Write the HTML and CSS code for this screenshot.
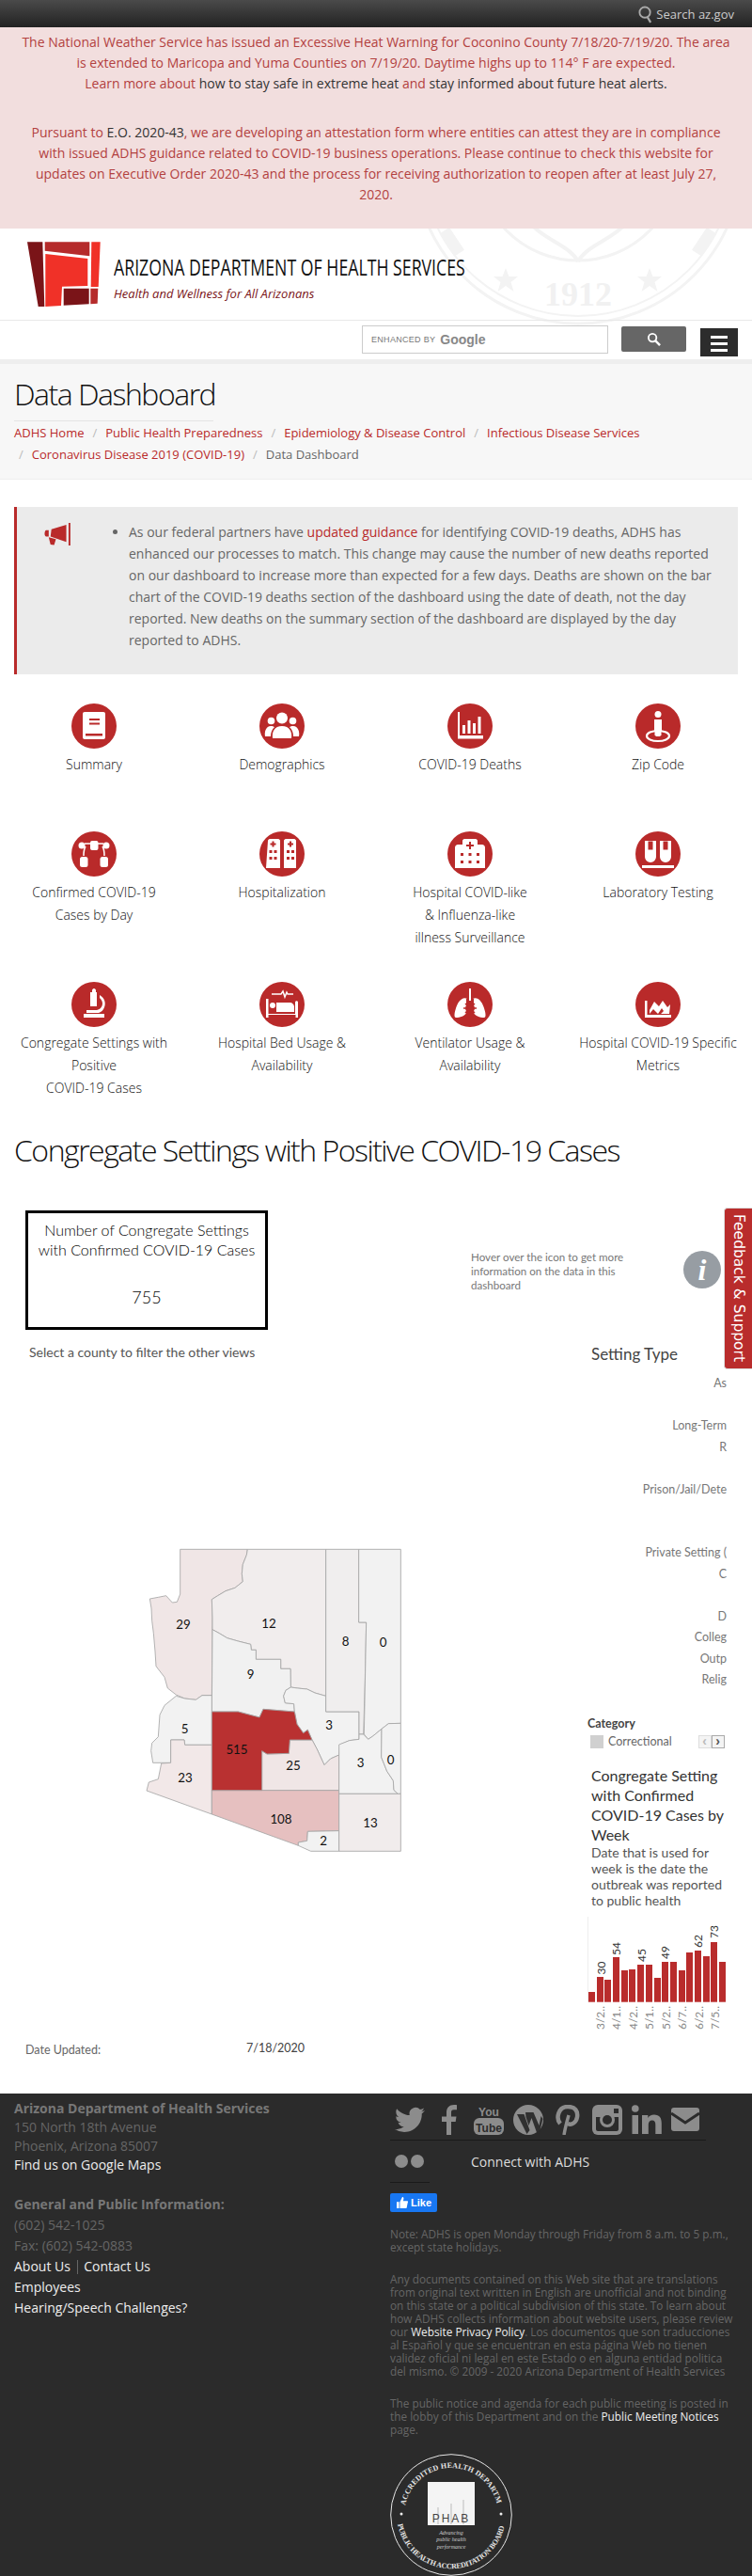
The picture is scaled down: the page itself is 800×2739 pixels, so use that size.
FILE: index.html
```html
<!DOCTYPE html>
<html lang="en">
<head>
<meta charset="utf-8">
<title>Data Dashboard</title>
<link rel="stylesheet" href="styles.css">
</head>
<body>
<div class="topbar">
  <svg class="top-search" viewBox="0 0 16 22" width="15" height="22"><circle cx="7.5" cy="9" r="6" fill="none" stroke="#aaa" stroke-width="2"/><path d="M10.5 14.5l3.5 6" stroke="#aaa" stroke-width="2.4"/></svg>
  <span>Search az.gov</span>
</div>
<section class="alert">
  <p>The National Weather Service has issued an Excessive Heat Warning for Coconino County 7/18/20-7/19/20. The area is extended to Maricopa and Yuma Counties on 7/19/20. Daytime highs up to 114° F are expected.<br>Learn more about <a class="dk">how to stay safe in extreme heat</a> and <a class="dk">stay informed about future heat alerts.</a></p>
  <p>Pursuant to <a class="dk">E.O. 2020-43</a>, we are developing an attestation form where entities can attest they are in compliance with issued ADHS guidance related to COVID-19 business operations. Please continue to check this website for updates on Executive Order 2020-43 and the process for receiving authorization to reopen after at least July 27, 2020.</p>
</section>
<div class="masthead">
  <svg class="seal-mark" viewBox="0 0 360 360" width="360" height="360">
    <g fill="none" stroke="#f3f3f3">
      <circle cx="180" cy="97" r="174" stroke-width="3"/>
      <circle cx="180" cy="97" r="166" stroke-width="2"/>
      <circle cx="180" cy="97" r="107" stroke-width="3"/>
      <path d="M180 205c-10-18-38-24-50-40M180 205c10-18 38-24 50-40" stroke-width="4"/>
      <path d="M54 196l-16-24M306 196l16-24" stroke-width="12"/>
    </g>
    <g fill="#f3f3f3">
      <path d="M103 212l3.500 9h9.500l-7.500 6 3 10-8.500-6-8.500 6 3-10-7.500-6h9.500z"/>
      <path d="M256 212l3.500 9h9.500l-7.500 6 3 10-8.500-6-8.500 6 3-10-7.500-6h9.500z"/>
    </g>
    <text x="180" y="252" text-anchor="middle" class="seal-year">1912</text>
  </svg>
  <header class="brand">
    <svg class="logo" viewBox="9 7 79 70" width="79" height="70">
      <polygon points="9,7.3 25.3,7.3 27.3,76 20.7,76" fill="#7a1418"/>
      <polygon points="27.7,7.3 75.3,7.3 75.3,22.3 27.7,16.7" fill="#b52b2b"/>
      <polygon points="28.3,20 73.3,25 73.3,54 46,54.7 45,75 28.3,76" fill="#f03128"/>
      <polygon points="77.3,7.3 86.7,7.3 84.7,55 76.7,55" fill="#f03128"/>
      <polygon points="47.7,56.7 74.7,56.7 74.7,73.3 47.7,74.7" fill="#7a1418"/>
      <polygon points="76.3,56.7 84.3,56.7 83.7,72.7 76.3,73.3" fill="#b52b2b"/>
    </svg>
    <div class="brand-text">
      <div class="brand-name">ARIZONA DEPARTMENT OF HEALTH SERVICES</div>
      <div class="brand-tag">Health and Wellness for All Arizonans</div>
    </div>
  </header>
  <div class="search-row">
    <div class="search-input"><span class="enh">ENHANCED BY</span><span class="goog">Google</span></div>
    <button class="search-btn" type="button"><svg viewBox="0 0 16 16" width="15" height="15"><circle cx="6.5" cy="6.5" r="4.5" fill="none" stroke="#fff" stroke-width="2"/><path d="M10 10l5 5" stroke="#fff" stroke-width="2.6"/></svg></button>
    <div class="burger"><i></i><i></i><i></i></div>
  </div>
</div>
<div class="stripe"></div>
<section class="pagehead">
  <h1>Data Dashboard</h1>
  <nav class="crumbs">
    <a>ADHS Home</a><b>/</b><a>Public Health Preparedness</a><b>/</b><a>Epidemiology &amp; Disease Control</a><b>/</b><a>Infectious Disease Services</a><br><b class="first">/</b><a>Coronavirus Disease 2019 (COVID-19)</a><b>/</b><span>Data Dashboard</span>
  </nav>
</section>
<section class="notice">
  <svg class="horn" viewBox="0 0 32 25" width="31" height="24"><path d="M30 0h2v25h-2zM27.5 2v19L10 15l1-8zM8 8v7H5c-2-.5-2-6 0-7zM8 16l8 2-2 6.500-4-.5z" fill="#b92a2a"/></svg>
  <ul><li>As our federal partners have <a>updated guidance</a> for identifying COVID-19 deaths, ADHS has enhanced our processes to match. This change may cause the number of new deaths reported on our dashboard to increase more than expected for a few days. Deaths are shown on the bar chart of the COVID-19 deaths section of the dashboard using the date of death, not the day reported. New deaths on the summary section of the dashboard are displayed by the day reported to ADHS.</li></ul>
</section>
<section class="tiles">
  <a class="tile"><svg viewBox="0 0 48 48"><circle cx="24" cy="24" r="24" fill="#b92a2a"/><path d="M14 9h20a2 2 0 0 1 2 2v25a2 2 0 0 1-2 2H14a2 2 0 0 1-2-2V11a2 2 0 0 1 2-2z" fill="#fff"/><path d="M19 16h11v2H19zM19 20.500h11v2H19zM15 32h18v2.500H15z" fill="#b92a2a"/></svg><span>Summary</span></a>
  <a class="tile"><svg viewBox="0 0 48 48"><circle cx="24" cy="24" r="24" fill="#b92a2a"/><g fill="#fff"><circle cx="24" cy="15.500" r="6"/><circle cx="12.500" cy="18.500" r="3.800"/><circle cx="35.500" cy="18.500" r="3.800"/><path d="M14 37c-1-7 2-13 10-13s11 6 10 13z"/><path d="M12 35H6c-1-5 1-11 6-11 2 0 3 .5 4 1-3 3-4 6-4 10zM36 35h6c1-5-1-11-6-11-2 0-3 .5-4 1 3 3 4 6 4 10z"/></g></svg><span>Demographics</span></a>
  <a class="tile"><svg viewBox="0 0 48 48"><circle cx="24" cy="24" r="24" fill="#b92a2a"/><path d="M11 9h2v25h25v3.500H11z" fill="#fff"/><path d="M16 23h3v9h-3zM21.500 18h3v14h-3zM27 21h3v11h-3zM32.500 14h3v18h-3z" fill="#fff"/></svg><span>COVID-19 Deaths</span></a>
  <a class="tile"><svg viewBox="0 0 48 48"><circle cx="24" cy="24" r="24" fill="#b92a2a"/><g fill="#fff"><circle cx="24" cy="11.500" r="3.500"/><path d="M20 17h8v12l-1.500 1v5h-5v-5L20 29z"/></g><ellipse cx="24" cy="34.500" rx="12" ry="5.500" fill="none" stroke="#fff" stroke-width="2.200"/><path d="M20.500 26h7v8h-7z" fill="#fff"/></svg><span>Zip Code</span></a>

  <a class="tile"><svg viewBox="0 0 48 48"><circle cx="24" cy="24" r="24" fill="#b92a2a"/><g fill="#fff"><rect x="20" y="10" width="8.500" height="10" rx="2"/><circle cx="11" cy="15" r="3.500"/><circle cx="37" cy="15" r="3.500"/><rect x="9" y="27" width="8.500" height="11" rx="2.500"/><rect x="30.500" y="27" width="8.500" height="11" rx="2.500"/></g><path d="M14 13h6M34 13h-6M15 16c-2 3-2 7-2 10M33 16c2 3 2 7 2 10" fill="none" stroke="#fff" stroke-width="1.500"/></svg><span>Confirmed COVID-19<br>Cases by Day</span></a>
  <a class="tile"><svg viewBox="0 0 48 48"><circle cx="24" cy="24" r="24" fill="#b92a2a"/><path d="M9 10c0-1 1-2 2-2h9c1 0 2 1 2 2v29H7zM26 10c0-1 1-2 2-2h9c1 0 2 1 2 2v29H26z" fill="#fff"/><path d="M13.500 10.500h2v2h2v2h-2v2h-2v-2h-2v-2h2zM32 10.500h2v2h2v2h-2v2h-2v-2h-2v-2h2zM10.500 20h3v3h-3zM15.500 20h3v3h-3zM10.500 27h3v3h-3zM15.500 27h3v3h-3zM29 20h3v3h-3zM34 20h3v3h-3zM29 27h3v3h-3zM34 27h3v3h-3z" fill="#b92a2a"/></svg><span>Hospitalization</span></a>
  <a class="tile"><svg viewBox="0 0 48 48"><circle cx="24" cy="24" r="24" fill="#b92a2a"/><path d="M16 10c0-1 1-2 2-2h12c1 0 2 1 2 2v4h5c1 0 3 1 3 3v22H8V17c0-2 2-3 3-3h5z" fill="#fff"/><path d="M23 11h2v3h3v2h-3v3h-2v-3h-3v-2h3zM14 23h3v3h-3zM22.500 23h3v3h-3zM31 23h3v3h-3zM14 31h3v3h-3zM22.500 31h3v3h-3zM31 31h3v3h-3z" fill="#b92a2a"/></svg><span>Hospital COVID-like<br>&amp; Influenza-like<br>illness Surveillance</span></a>
  <a class="tile"><svg viewBox="0 0 48 48"><circle cx="24" cy="24" r="24" fill="#b92a2a"/><path d="M10 10h12v17a6 6 0 0 1-12 0zM26 10h12v17a6 6 0 0 1-12 0zM7 36h34v3H7z" fill="#fff"/><path d="M13.500 10.500h5v9h-5zM29.500 10.500h5v9h-5z" fill="#b92a2a"/></svg><span>Laboratory Testing</span></a>

  <a class="tile"><svg viewBox="0 0 48 48"><circle cx="24" cy="24" r="24" fill="#b92a2a"/><g fill="#fff"><path d="M22 9c0-1 1-2 2-2s2 1 2 2v2h1v15h-7V11h2z"/><path d="M30 14c5 3 7 8 5 13-1 3-3 5-6 6H16v-3h11c4-1 6-4 6-7 0-2-1-4-3-6z"/><path d="M13 34h22v4H13z"/></g></svg><span>Congregate Settings with<br>Positive<br>COVID-19 Cases</span></a>
  <a class="tile"><svg viewBox="0 0 48 48"><circle cx="24" cy="24" r="24" fill="#b92a2a"/><path d="M13 13h10l2-3 2 6 2-5 1 2h6" fill="none" stroke="#fff" stroke-width="1.500"/><g fill="#fff"><path d="M7 18h2.500v16H38v-12c0-2 2-2 3-1v17h-2.500v-3h-29v3H7z"/><circle cx="14" cy="25" r="3"/><path d="M18 22h14c3 0 5 2 5 5v5H18z"/></g></svg><span>Hospital Bed Usage &amp;<br>Availability</span></a>
  <a class="tile"><svg viewBox="0 0 48 48"><circle cx="24" cy="24" r="24" fill="#b92a2a"/><path d="M23 7h2v13h-2zM21 18c-5-3-10 3-12 10-2 6-2 10 0 10 4 0 10-2 11-5V18zM27 18c5-3 10 3 12 10 2 6 2 10 0 10-4 0-10-2-11-5V18z" fill="#fff"/><circle cx="24" cy="28" r="5" fill="#b92a2a"/><path d="M24 21v14M17 28h14M19 23l10 10M29 23L19 33" stroke="#b92a2a" stroke-width="1.500"/></svg><span>Ventilator Usage &amp;<br>Availability</span></a>
  <a class="tile"><svg viewBox="0 0 48 48"><circle cx="24" cy="24" r="24" fill="#b92a2a"/><path d="M10 20h2.500v15H38v3H10z" fill="#fff"/><path d="M15 30l5-9 5 5 4-6 5 7 3-3-1 10H27l3-3-2-3-4 6-5-5-4 5z" fill="#fff"/></svg><span>Hospital COVID-19 Specific<br>Metrics</span></a>
</section>
<h2 class="section-title">Congregate Settings with Positive COVID-19 Cases</h2>
<section class="dash">
  <div class="dash-top">
    <div class="kpi">
      <div class="kpi-title">Number of Congregate Settings<br>with Confirmed COVID-19 Cases</div>
      <div class="kpi-num">755</div>
    </div>
    <p class="hover-note">Hover over the icon to get more information on the data in this dashboard</p>
    <div class="info">i</div>
  </div>
  <div class="dash-body">
    <div class="dash-left">
      <p class="select-note">Select a county to filter the other views</p>
      <svg class="map" viewBox="0 0 1080 1110" width="360" height="370">
        <g stroke="#a5a5a5" stroke-width="2.500" stroke-linejoin="round">
          <path fill="#f0e6e6" d="M275,82 L490,82 L487,100 L475,130 L472,160 L475,185 L450,205 L420,215 L395,230 L376,242 L378,300 L376,548 L345,548 L325,562 L290,558 L262,546 L235,525 L225,490 L198,455 L195,408 L190,350 L185,310 L183,270 L178,240 L205,235 L230,230 L250,252 L265,250 L275,225 Z"/>
          <path fill="#f1eded" d="M490,82 L740,82 L740,550 L705,540 L680,528 L650,525 L628,522 L627,463 L596,463 L596,433 L517,433 L517,403 L502,403 L500,385 L460,375 L425,365 L400,350 L378,338 L378,300 L376,242 L395,230 L420,215 L450,205 L475,185 L472,160 L475,130 L487,100 Z"/>
          <path fill="#f1f1f1" d="M378,338 L400,350 L425,365 L460,375 L500,385 L502,403 L517,403 L517,433 L596,433 L596,463 L627,463 L628,522 L612,532 L605,550 L610,572 L638,575 L640,600 L540,592 L528,618 L460,600 L376,600 Z"/>
          <path fill="#f2f2f2" d="M628,522 L650,525 L680,528 L705,540 L740,550 L740,600 L846,600 L846,688 L815,692 L785,705 L782,738 L755,750 L735,770 L712,720 L696,690 L682,658 L668,668 L648,640 L640,600 L638,575 L610,572 L605,550 L612,532 Z"/>
          <path fill="#f0eeee" d="M740,82 L845,82 L845,315 L869,315 L865,500 L860,672 L846,672 L846,600 L740,600 Z"/>
          <path fill="#f2f2f2" d="M845,82 L979,82 L979,637 L940,638 L918,655 L890,678 L875,688 L862,672 L869,315 L845,315 Z"/>
          <path fill="#f2f2f2" d="M376,548 L376,706 L290,706 L288,690 L245,690 L245,763 L188,763 L182,725 L185,700 L205,680 L210,610 L225,580 L262,550 L290,558 L325,562 L345,548 Z"/>
          <path fill="#f2e8e8" d="M245,690 L288,690 L290,706 L376,706 L376,927 L168,852 L175,825 L205,815 L215,765 L245,763 Z"/>
          <path fill="#f0e6e6" d="M536,725 L552,735 L622,733 L625,690 L696,690 L712,720 L735,770 L755,750 L782,738 L782,851 L536,851 Z"/>
          <path fill="#e6c0c0" d="M376,851 L782,851 L782,980 L682,982 L680,1012 L652,1017 L652,1027 L376,927 Z"/>
          <path fill="#f2f2f2" d="M682,982 L782,980 L782,1045 L692,1045 L652,1027 L652,1017 L680,1012 Z"/>
          <path fill="#f2f2f2" d="M782,705 L815,692 L846,688 L846,672 L860,672 L875,688 L890,678 L918,655 L917,745 L935,790 L955,820 L957,850 L970,862 L782,862 Z"/>
          <path fill="#f2f2f2" d="M918,655 L940,638 L979,637 L979,862 L970,862 L957,850 L955,820 L935,790 L917,745 Z"/>
          <path fill="#f1ecec" d="M782,862 L979,862 L979,1045 L782,1045 Z"/>
          <path fill="#b93131" d="M376,600 L460,600 L528,618 L540,592 L640,600 L648,640 L668,668 L682,658 L696,690 L625,690 L622,733 L552,735 L536,725 L536,851 L376,851 Z"/>
        </g>
        <g class="map-nums" text-anchor="middle">
          <text x="285" y="336">29</text><text x="558" y="332">12</text><text x="803" y="390">8</text><text x="923" y="393">0</text><text x="500" y="494">9</text><text x="290" y="669">5</text><text x="750" y="657">3</text><text x="456" y="734">515</text><text x="636" y="786">25</text><text x="291" y="824">23</text><text x="851" y="777">3</text><text x="947" y="768">0</text><text x="597" y="957">108</text><text x="882" y="969">13</text><text x="732" y="1027">2</text>
        </g>
      </svg>
      <div class="date-row"><span>Date Updated:</span><span class="date-val">7/18/2020</span></div>
    </div>
    <aside class="dash-right">
      <h3 class="set-title">Setting Type</h3>
      <ul class="set-list">
        <li>As</li><li></li><li>Long-Term</li><li>R</li><li></li><li>Prison/Jail/Dete</li><li></li><li></li><li>Private Setting (</li><li>C</li><li></li><li>D</li><li>Colleg</li><li>Outp</li><li>Relig</li>
      </ul>
      <div class="cat-title">Category</div>
      <div class="cat-row"><i class="swatch"></i><span>Correctional</span><div class="pager"><b class="off">‹</b><b>›</b></div></div>
      <h3 class="week-title">Congregate Setting<br>with Confirmed<br>COVID-19 Cases by<br>Week</h3>
      <p class="week-sub">Date that is used for<br>week is the date the<br>outbreak was reported<br>to public health</p>
      <svg class="bars" viewBox="0 206 200 130" width="200" height="130">
        <path d="M25.500 215v91" stroke="#eee"/>
        <g fill="#b92c2c">
          <rect x="26" y="295" width="7" height="10.700"/><rect x="35" y="279" width="7" height="26.700"/><rect x="43" y="282" width="7" height="23.700"/><rect x="52" y="258" width="7" height="47.700"/><rect x="61" y="272" width="7" height="33.700"/><rect x="69" y="271" width="7" height="34.700"/><rect x="78" y="266" width="7" height="39.700"/><rect x="87" y="266" width="7" height="39.700"/><rect x="96" y="280" width="7" height="25.700"/><rect x="104" y="263" width="7" height="42.700"/><rect x="113" y="263" width="7" height="42.700"/><rect x="122" y="272" width="7" height="33.700"/><rect x="130" y="253" width="7" height="52.700"/><rect x="139" y="251" width="7" height="54.700"/><rect x="148" y="257" width="7" height="48.700"/><rect x="156" y="242" width="7" height="63.700"/><rect x="165" y="263" width="7" height="42.700"/>
        </g>
        <g class="bar-val">
          <text transform="translate(43.500 276.500) rotate(-90)">30</text><text transform="translate(60 256) rotate(-90)">54</text><text transform="translate(87 263) rotate(-90)">45</text><text transform="translate(112 260) rotate(-90)">49</text><text transform="translate(147 248) rotate(-90)">62</text><text transform="translate(164 238) rotate(-90)">73</text>
        </g>
        <g class="bar-lab">
          <text transform="translate(43 310) rotate(-90)">3/2..</text><text transform="translate(60 310) rotate(-90)">4/1..</text><text transform="translate(78 310) rotate(-90)">4/2..</text><text transform="translate(95 310) rotate(-90)">5/1..</text><text transform="translate(113 310) rotate(-90)">5/2..</text><text transform="translate(130 310) rotate(-90)">6/7..</text><text transform="translate(148 310) rotate(-90)">6/2..</text><text transform="translate(165 310) rotate(-90)">7/5..</text>
        </g>
      </svg>
    </aside>
  </div>
</section>
<a class="feedback">Feedback &amp; Support</a>
<footer class="footer">
  <div class="f-left">
    <h4>Arizona Department of Health Services</h4>
    <div class="addr">150 North 18th Avenue</div>
    <div class="addr">Phoenix, Arizona 85007</div>
    <a class="addr lnk">Find us on Google Maps</a>
    <h4 class="gen">General and Public Information:</h4>
    <div class="info-line">(602) 542-1025</div>
    <div class="info-line">Fax: (602) 542-0883</div>
    <div class="info-line lnk">About Us <i class="sep"></i> Contact Us</div>
    <div class="info-line lnk">Employees</div>
    <div class="info-line lnk">Hearing/Speech Challenges?</div>
  </div>
  <div class="f-right">
    <div class="socials">
      <svg viewBox="0 0 24 24" width="32" height="32"><path fill="#8c8c8c" d="M23.953 4.57a10 10 0 01-2.825.775 4.958 4.958 0 002.163-2.723c-.951.555-2.005.959-3.127 1.184a4.92 4.92 0 00-8.384 4.482C7.69 8.095 4.067 6.13 1.64 3.162a4.822 4.822 0 00-.666 2.475c0 1.71.87 3.213 2.188 4.096a4.904 4.904 0 01-2.228-.616v.06a4.923 4.923 0 003.946 4.827 4.996 4.996 0 01-2.212.085 4.936 4.936 0 004.604 3.417 9.867 9.867 0 01-6.102 2.105c-.39 0-.779-.023-1.17-.067a13.995 13.995 0 007.557 2.209c9.053 0 13.998-7.496 13.998-13.985 0-.21 0-.42-.015-.63A9.935 9.935 0 0024 4.59z"/></svg>
      <svg viewBox="0 0 32 32" width="32" height="32"><path fill="#8c8c8c" d="M13 32V18H8v-5.500h5V8c0-5 3-8 8-8 2 0 3 .1 3 .2v5h-3c-2.500 0-3 1.200-3 3v4.300h5.500l-.8 5.500H18v14z"/></svg>
      <svg viewBox="0 0 32 32" width="32" height="32"><rect y="14" width="32" height="18" rx="6" fill="#8c8c8c"/><text x="16" y="11.500" class="yt yt-a" text-anchor="middle">You</text><text x="16" y="28.500" class="yt yt-b" text-anchor="middle">Tube</text></svg>
      <svg viewBox="0 0 32 32" width="32" height="32"><circle cx="16" cy="16" r="16" fill="#8c8c8c"/><path d="M4 10h7.500l6 17-3 4zM13 8h8.500l6 14 2-10 2 3-4 16h-2l-6-17-3 8-3-9z" fill="#2b2b2b" opacity=".95"/></svg>
      <svg viewBox="0 0 32 32" width="32" height="32"><path d="M12 32c1-6 3-14 5-21" fill="none" stroke="#8c8c8c" stroke-width="3.500"/><path d="M8 20C3 14 6 2 16 2c8 0 11 5 10 11-1 6-6 9-10 7" fill="none" stroke="#8c8c8c" stroke-width="4.500"/></svg>
      <svg viewBox="0 0 32 32" width="32" height="32"><rect width="32" height="32" rx="6" fill="#8c8c8c"/><path d="M4 13h24v13c0 1-1 2-2 2H6c-1 0-2-1-2-2z" fill="#2b2b2b"/><circle cx="16" cy="16" r="8" fill="#8c8c8c"/><circle cx="16" cy="16" r="5" fill="#2b2b2b"/><rect x="23" y="4" width="5" height="5" fill="#2b2b2b"/></svg>
      <svg viewBox="0 0 32 32" width="32" height="32"><circle cx="3.800" cy="4" r="3.800" fill="#8c8c8c"/><path fill="#8c8c8c" d="M.500 11h6.500v20H.500zM11 11h6.300v3c1-2 3.500-3.500 6.500-3.500 6 0 8 3.500 8 9.500v11h-6.500V21c0-3-1-4.500-3.500-4.500s-4 1.800-4 4.500v10H11z"/></svg>
      <svg viewBox="0 0 32 32" width="32" height="32"><rect y="3" width="30" height="25" rx="3" fill="#8c8c8c"/><path d="M0 9l15 10L30 9" fill="none" stroke="#2b2b2b" stroke-width="3"/></svg>
    </div>
    <div class="connect"><div class="flickr"><i></i><i></i></div><span>Connect with ADHS</span></div>
    <hr class="short">
    <div class="like"><svg viewBox="0 0 14 14" width="14" height="14"><path fill="#fff" d="M0 6h3v8H0zM4 6l3-6c2 0 2 2 1 5h5c1.500 0 1 2 .5 3l-1 5c-.2 1-1 1-1.500 1H4z"/></svg><span>Like</span></div>
    <p class="fine">Note: ADHS is open Monday through Friday from 8 a.m. to 5 p.m., except state holidays.</p>
    <p class="fine">Any documents contained on this Web site that are translations from original text written in English are unofficial and not binding on this state or a political subdivision of this state. To learn about how ADHS collects information about website users, please review our <a>Website Privacy Policy</a>. Los documentos que son traducciones al Español y que se encuentran en esta página Web no tienen validez oficial ni legal en este Estado o en alguna entidad politica del mismo. © 2009 - 2020 Arizona Department of Health Services</p>
    <p class="fine">The public notice and agenda for each public meeting is posted in the lobby of this Department and on the <a>Public Meeting Notices</a> page.</p>
    <svg class="phab" viewBox="0 0 130 130" width="130" height="130">
      <circle cx="65" cy="65" r="64.300" fill="none" stroke="#e6e6e6" stroke-width="1"/>
      <defs>
        <path id="arcTop" d="M16 55A50 50 0 0 1 114 55"/>
        <path id="arcBot" d="M8 75A58 58 0 0 0 122 75"/>
      </defs>
      <text class="phab-arc"><textPath href="#arcTop" textLength="152">ACCREDITED HEALTH DEPARTMENT</textPath></text>
      <text class="phab-arc"><textPath href="#arcBot" textLength="158">PUBLIC HEALTH ACCREDITATION BOARD</textPath></text>
      <circle cx="12" cy="64" r="1.500" fill="#eee"/><circle cx="118" cy="64" r="1.500" fill="#eee"/>
      <rect x="40" y="30" width="50" height="46" fill="#f4f4f4"/>
      <path d="M51 57v18M65 53v22M78 49v26" stroke="#bbb"/>
      <text x="65" y="73" text-anchor="middle" class="phab-word">PHAB</text>
      <text x="65" y="86" text-anchor="middle" class="phab-small">Advancing</text>
      <text x="65" y="93" text-anchor="middle" class="phab-small">public health</text>
      <text x="65" y="101" text-anchor="middle" class="phab-small">performance</text>
    </svg>
  </div>
</footer>
</body>
</html>
```
FILE: styles.css
```css
*{box-sizing:border-box}
html,body{margin:0;padding:0}
body{position:relative;width:800px;height:2739px;overflow:hidden;font-family:"Open Sans",sans-serif;font-size:14px;color:#333;background:#fff}
p,h1,h2,h3,h4,ul{margin:0;padding:0}
a{color:inherit;text-decoration:none}

.topbar{height:29px;background:linear-gradient(#4a4a4a,#222);color:#ccc;display:flex;align-items:center;justify-content:flex-end;gap:4px;padding-right:19px;font-size:13px}
.top-search{display:block}

.alert{height:214px;padding:5px 20px 0;background:#f2dede;color:#b3413f;text-align:center;font-size:14px;line-height:22px}
.alert p+p{margin-top:30px}
.alert .dk{color:#333}

.masthead{position:relative;overflow:hidden;background:#fff}
.seal-mark{position:absolute;left:435px;top:-170px}
.seal-year{font-family:"Liberation Serif",serif;font-size:36px;font-weight:700;fill:#f1f1f1}
.brand{position:relative;height:97px;display:flex;padding:14px 0 0 29px;align-items:flex-start}
.logo{display:block;flex:none}
.brand-text{margin-left:13px;margin-top:12px}
.brand-name{font-family:"Open Sans",sans-serif;font-weight:400;font-size:23px;line-height:30px;color:#111;white-space:nowrap;transform:scaleX(.77);transform-origin:0 0}
.brand-tag{font-style:italic;font-size:13px;line-height:18px;margin-top:4px;color:#7a1418;white-space:nowrap}
.search-row{position:relative;height:42px;border-top:1px solid #e8e8e8;display:flex;align-items:flex-start;padding:5px 15px 0 385px}
.search-input{width:262px;height:30px;border:1px solid #ccc;background:#fff;display:flex;align-items:center;padding-left:9px;gap:5px}
.enh{font-family:"Liberation Sans",sans-serif;font-size:9px;color:#777;letter-spacing:.3px}
.goog{font-family:"Liberation Sans",sans-serif;font-size:14px;font-weight:700;color:#888}
.search-btn{width:69px;height:27px;margin:1px 0 0 14px;border:0;border-radius:2px;background:#666;padding:0;display:flex;align-items:center;justify-content:center}
.burger{width:40px;height:30px;margin:3px 0 0 15px;background:#2c2c2c;display:flex;flex-direction:column;justify-content:flex-end;gap:4px;padding:0 11px 5px}
.burger i{display:block;height:3px;background:#fff}
.stripe{height:5px;background:#eee}

.pagehead{height:123px;background:#f7f7f7;border-bottom:1px solid #eee;padding:0 15px}
.pagehead h1{font-weight:300;font-size:32px;letter-spacing:-1.5px;line-height:40px;padding-top:12px;width:212px;height:61px;border-bottom:1px solid #e4e4e4;color:#111;white-space:nowrap}
.crumbs{font-size:13px;line-height:23px;margin-top:1px;color:#666}
.crumbs a{color:#b92a2a}
.crumbs b{font-weight:400;color:#bbb;padding:0 9px}
.crumbs b.first{padding-left:5px}

.notice{margin:29px 15px 0;height:178px;background:#ebebeb;border-left:3px solid #b92a2a;position:relative;padding:15px 27px 0 119px;color:#666;font-size:14px;line-height:23px}
.notice ul{list-style:disc}
.notice a{color:#b92a2a}
.horn{position:absolute;left:26px;top:17px}

.tiles{margin-top:31px;display:grid;grid-template-columns:repeat(4,200px)}
.tile{min-height:136px;padding-bottom:35px;display:flex;flex-direction:column;align-items:center;text-align:center;line-height:24px;color:#111;font-weight:300;white-space:nowrap}
.tile svg{display:block;width:48px;height:48px;margin-bottom:5px;flex:none}
.section-title{font-weight:300;font-size:32px;letter-spacing:-1.5px;line-height:44px;margin:-3px 0 0 15px;color:#111;white-space:nowrap}

.dash{font-family:Lato,sans-serif;color:#333}
.dash-top{display:flex;align-items:flex-start;padding:42px 0 0 27px;height:169px}
.kpi{width:258px;height:127px;border:3px solid #000;text-align:center;padding-top:7px;flex:none;font-weight:300;color:#000}
.kpi-title{font-size:16px;line-height:21px}
.kpi-num{font-size:18px;line-height:24px;margin-top:28px}
.hover-note{width:170px;margin:42px 0 0 216px;font-size:11.600px;line-height:15px;color:#777}
.info{width:40px;height:40px;border-radius:50%;margin:43px 0 0 56px;background:#979da3;color:#fff;font-family:"Liberation Serif",serif;font-style:italic;font-weight:700;font-size:32px;line-height:40px;text-align:center;flex:none}
.dash-body{display:flex}
.dash-left{width:600px;padding-top:16px}
.select-note{margin-left:31px;font-size:14px;line-height:16px;color:#555}
.map{display:block;margin:174px 0 0 100px}
.map-nums{font-family:Lato,sans-serif;font-size:40px;fill:#111}
.date-row{display:flex;margin:182px 0 0 27px;font-size:12.500px;line-height:16px;color:#666}
.date-row span:first-child{width:235px}
.date-val{margin-top:-2px;color:#444}
.dash-right{width:200px;padding-top:16px}
.set-title{font-weight:400;font-size:17px;line-height:20px;padding-left:29px;color:#444}
.set-list{list-style:none;margin-top:10px;padding-right:27px;text-align:right;font-size:12.500px;color:#777}
.set-list li{height:22.500px;line-height:22.500px;white-space:nowrap}
.cat-title{margin:28px 0 0 25px;font-size:12.500px;line-height:14px;font-weight:700;color:#444}
.cat-row{display:flex;align-items:center;margin:5px 0 0 28px;height:14px;font-size:12.500px;color:#666}
.swatch{display:block;width:14px;height:14px;background:#d0d0d0;margin-right:5px}
.pager{display:flex;margin-left:28px}
.pager b{display:block;width:14px;height:14px;border:1px solid #aaa;background:#f4f4f4;font:700 14px/10px "Liberation Sans",sans-serif;text-align:center;color:#555}
.pager b.off{color:#bbb;border-color:#ddd}
.week-title{margin:18px 0 0 29px;font-weight:400;font-size:16px;line-height:21px;color:#333;white-space:nowrap}
.week-sub{margin-left:29px;font-size:14px;line-height:17px;color:#555;white-space:nowrap}
.bars{display:block}
.bar-val{font-family:Lato,sans-serif;font-size:12px;fill:#333}
.bar-lab{font-family:Lato,sans-serif;font-size:12px;fill:#888;text-anchor:end}

.feedback{position:absolute;right:0;top:1284px;width:30px;height:172px;background:#b92c2c;border:1px solid #ddd;border-right:0;border-radius:4px 0 0 4px;color:#fff;font-family:"DejaVu Sans",sans-serif;font-size:15.500px;writing-mode:vertical-rl;text-align:center;line-height:28px;white-space:nowrap}

.footer{position:absolute;left:0;right:0;top:2226px;height:513px;background:#2b2b2b;display:flex;color:#777}
.f-left{width:415px;padding:6px 0 0 15px}
.f-left h4{font-size:14px;line-height:20px;font-weight:700;color:#777}
.addr{display:block;line-height:20px;color:#666}
.addr.lnk{color:#eee}
.f-left .gen{margin-top:21px;line-height:22px}
.info-line{line-height:22px;color:#666}
.info-line.lnk{color:#eee}
.sep{display:inline-block;width:1px;height:15px;background:#666;margin:0 3px;vertical-align:-3px}
.f-right{width:372px;padding-top:12px}
.socials{display:flex;gap:10px;padding:0 0 6px 5px;width:336px;border-bottom:1px solid #1a1a1a;height:38px}
.socials svg{flex:none;display:block}
.yt{font-family:"Liberation Sans",sans-serif;font-weight:700}
.yt-a{font-size:12px;fill:#8c8c8c}
.yt-b{font-size:12px;fill:#2b2b2b}
.connect{display:flex;align-items:center;height:44px;color:#ddd;font-size:14px}
.flickr{display:flex;gap:3px;width:86px;padding-left:5px}
.flickr i{display:block;width:14px;height:14px;border-radius:50%;background:#8c8c8c}
.short{width:42px;margin:0;border:0;border-top:1px solid #1a1a1a}
.like{margin-top:11px;width:50px;height:20px;border-radius:2px;background:#1877f2;color:#fff;display:flex;align-items:center;gap:3px;padding-left:7px;font:700 11px "Liberation Sans",sans-serif}
.like svg{display:block;width:12px;height:12px}
.fine{font-size:11.800px;line-height:14px;color:#666;margin-top:16px}
.fine+.fine{margin-top:20px}
.fine a{color:#eee}
.phab{display:block;margin-top:19px}
.phab-arc{font-family:"Liberation Serif",serif;font-size:8px;font-weight:700;fill:#e6e6e6}
.phab-word{font-family:"Liberation Sans",sans-serif;font-size:12px;letter-spacing:2px;fill:#444}
.phab-small{font-family:"Liberation Serif",serif;font-style:italic;font-size:6px;fill:#ccc}
```
